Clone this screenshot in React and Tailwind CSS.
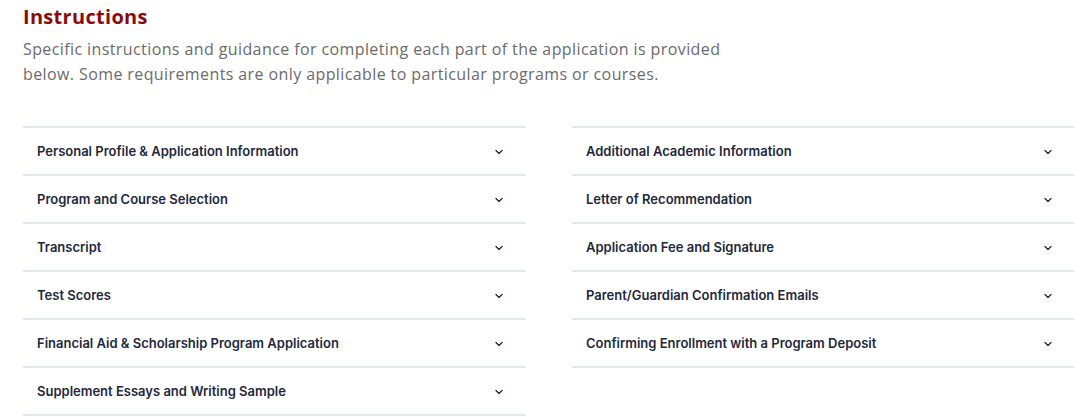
import { ChevronDown } from 'lucide-react';

const leftItems = [
  'Personal Profile & Application Information',
  'Program and Course Selection',
  'Transcript',
  'Test Scores',
  'Financial Aid & Scholarship Program Application',
  'Supplement Essays and Writing Sample',
];

const rightItems = [
  'Additional Academic Information',
  'Letter of Recommendation',
  'Application Fee and Signature',
  'Parent/Guardian Confirmation Emails',
  'Confirming Enrollment with a Program Deposit',
];

const AccordionRow = ({ title }) => (
  <button className="flex h-[48px] w-full items-center justify-between border-b-2 border-[#e2e8f0] pl-[14px] pr-[20px] pt-[2px] text-left">
    <span className="font-['Inter',sans-serif] text-[13px] font-semibold text-[#1e293b]">{title}</span>
    <ChevronDown className="h-[12px] w-[12px] text-[#1e293b]" strokeWidth={2.6} />
  </button>
);

const Column = ({ items }) => (
  <div className="border-t-2 border-[#e2e8f0]">
    {items.map(item => (
      <AccordionRow key={item} title={item} />
    ))}
  </div>
);

export default function App() {
  return (
    <div className="h-[417px] overflow-hidden bg-white pl-[23px] pr-[6px] pt-[4px]">
      <h2 className="font-['Open_Sans',sans-serif] text-[20px] font-bold leading-[26px] tracking-[0.3px] text-[#8b0a0a]">
        Instructions
      </h2>
      <p className="mt-[7px] max-w-[720px] font-['Open_Sans',sans-serif] text-[16px] leading-[25px] tracking-[0.4px] text-[#6b6b6b]">
        Specific instructions and guidance for completing each part of the application is provided below. Some requirements are only applicable to particular programs or courses.
      </p>
      <div className="mt-[39px] grid grid-cols-2 items-start gap-x-[47px]">
        <Column items={leftItems} />
        <Column items={rightItems} />
      </div>
    </div>
  );
}
